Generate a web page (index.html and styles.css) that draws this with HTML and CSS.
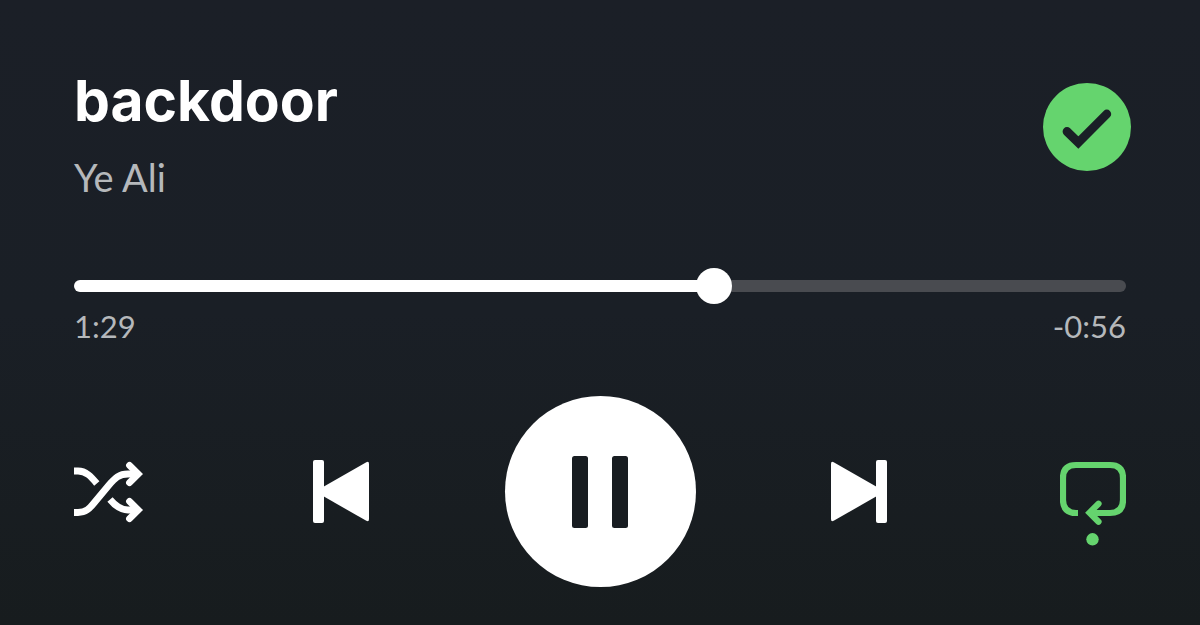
FILE: index.html
```html
<!DOCTYPE html>
<html lang="en">
<head>
	<meta charset="UTF-8">
	<meta name="viewport" content="width=device-width, initial-scale=1">
	<title>backdoor - Ye Ali</title>
	<link rel="stylesheet" href="styles.css">
</head>
<body>
	<main class="player">
		<header class="track">
			<div class="track_info">
				<h1 class="track_title">backdoor</h1>
				<p class="track_artist">Ye Ali</p>
			</div>
			<button class="saved" aria-label="Saved to library">
				<svg width="88" height="88" viewBox="0 0 88 88" fill="none">
					<circle cx="44" cy="44" r="44" fill="#65d46e"/>
					<path d="M24 48.500L35.300 59.500L63.800 31" stroke="#1a1f26" stroke-width="8.800" stroke-linecap="round"/>
				</svg>
			</button>
		</header>
		<section class="progress">
			<input class="seek" id="seek" type="range" min="0" max="145" step="any" value="88.8" aria-label="Seek" style="--played:61%">
			<div class="times">
				<span>1:29</span>
				<span>-0:56</span>
			</div>
		</section>
		<div class="controls">
			<button class="side" aria-label="Shuffle">
				<svg width="70" height="70" viewBox="0 0 70 70" fill="none" stroke="#fff" stroke-width="6.800">
					<path d="M0 14H4C12 14 17 19.500 22.800 26.500"/>
					<path d="M0 55.500H4C12 55.500 15.500 51.500 20 46L35 28C41 21 45 17 54 17H64"/>
					<path d="M36 42.500C41 48.500 46 53 54 53H64"/>
					<path d="M55.500 8.300L64.200 17L55.500 25.700M55.500 44.300L64.200 53L55.500 61.700" stroke-linecap="round"/>
				</svg>
			</button>
			<button aria-label="Previous">
				<svg width="56" height="63" viewBox="0 0 56 63" fill="#fff">
					<rect width="11" height="63" rx="2"/>
					<path d="M10 27L53.300 2.200Q56 .8 56 4V59Q56 62.200 53.300 60.800L10 36Z"/>
				</svg>
			</button>
			<button class="play" aria-label="Pause">
				<svg width="56" height="72" viewBox="0 0 56 72" fill="#181d21">
					<rect width="16" height="72" rx="2.500"/>
					<rect x="40" width="16" height="72" rx="2.500"/>
				</svg>
			</button>
			<button aria-label="Next">
				<svg width="56" height="63" viewBox="0 0 56 63" fill="#fff">
					<rect x="45" width="11" height="63" rx="2"/>
					<path d="M46 27L2.700 2.200Q0 .8 0 4V59Q0 62.200 2.700 60.800L46 36Z"/>
				</svg>
			</button>
			<button class="side side_end" aria-label="Repeat">
				<svg width="66" height="109" viewBox="0 0 66 109" fill="none" stroke="#65d46e" stroke-width="6.200">
					<path d="M18 76H16Q3 76 3 63V41Q3 28 16 28H50Q63 28 63 41V63Q63 76 50 76H30"/>
					<path d="M38.500 66.700L29.500 75.700L38.500 84.700" stroke-linecap="round"/>
					<circle cx="32.500" cy="102.300" r="6.200" fill="#65d46e" stroke="none"/>
				</svg>
			</button>
		</div>
	</main>
</body>
</html>
```
FILE: styles.css
```css
*{box-sizing: border-box;}
body{margin:0;min-height:100vh;background:linear-gradient(#1b1f27, #1a1f26 50%, #171c1e);color:#fff;font-family:Lato, "Liberation Sans", sans-serif;}
button{display:block;padding:0;border:none;background:none;cursor:pointer;}
svg{display:block;}
.player{padding:63px 74px 38px;}
.track{display:flex;justify-content:space-between;align-items:flex-start;margin-right:-5px;}
.track_info{display:grid;gap:14px;}
.track_title{margin:0;font-family:Inter, "Liberation Sans", sans-serif;font-size:57px;line-height:76px;font-weight:700;}
.track_artist{margin:0;font-size:38px;line-height:48px;color:#b5b8bb;}
.saved{margin-top:20px;border-radius:50%;}
.progress{display:grid;gap:3px;margin-top:67px;}
.seek{-webkit-appearance:none;appearance:none;width:100%;height:36px;margin:0;background:transparent;cursor:pointer;}
.seek::-webkit-slider-runnable-track{height:12px;border-radius:6px;background:linear-gradient(to right, #fff var(--played), #494b50 var(--played));}
.seek::-webkit-slider-thumb{-webkit-appearance:none;width:36px;height:36px;margin-top:-12px;border-radius:50%;background:#fff;}
.times{display:flex;justify-content:space-between;font-size:31px;line-height:38px;color:#b5b8bb;}
.controls{display:flex;justify-content:space-between;align-items:center;margin-top:51px;}
.side{width:104px;}
.side_end{display:flex;justify-content:flex-end;}
.play{display:grid;place-items:center;width:191px;height:191px;border-radius:50%;background:#fff;}
```
